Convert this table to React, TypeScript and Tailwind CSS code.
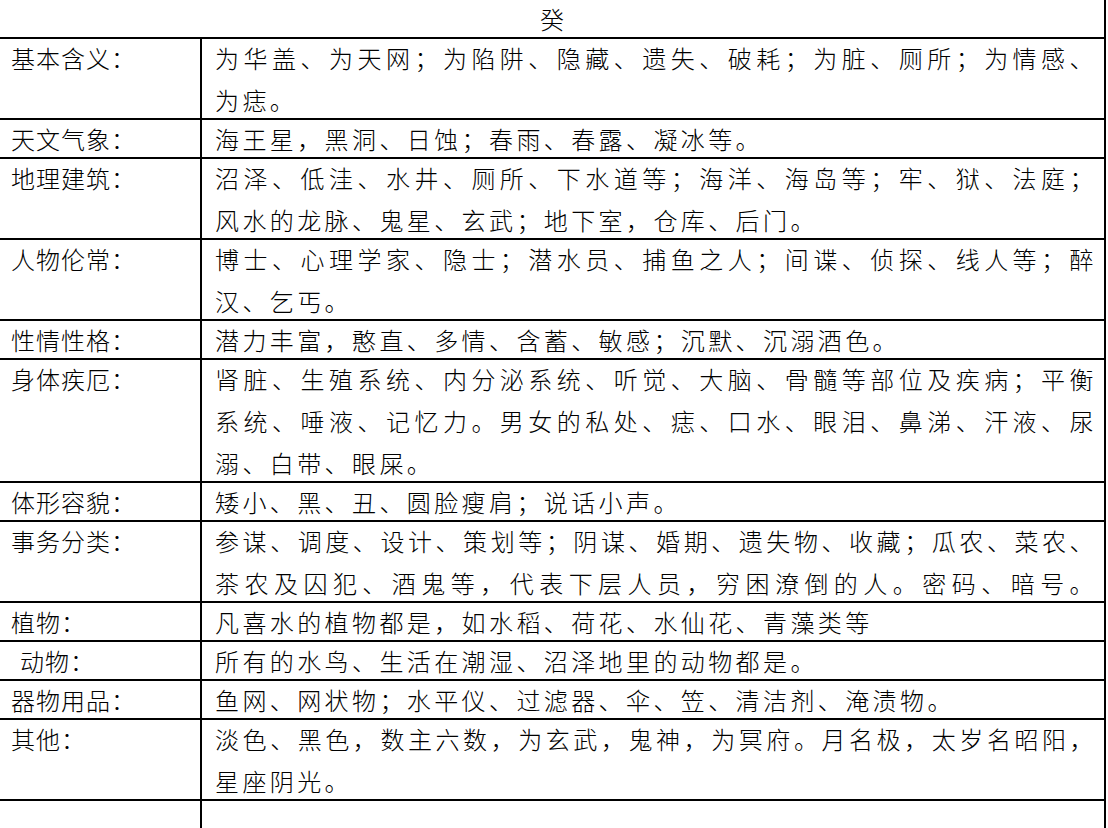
import React from "react";

type Row = { label: string; lines: string[]; indent?: boolean };

const rows: Row[] = [
  { label: "基本含义：", lines: ["为华盖、为天网；为陷阱、隐藏、遗失、破耗；为脏、厕所；为情感、", "为痣。"] },
  { label: "天文气象：", lines: ["海王星，黑洞、日蚀；春雨、春露、凝冰等。"] },
  { label: "地理建筑：", lines: ["沼泽、低洼、水井、厕所、下水道等；海洋、海岛等；牢、狱、法庭；", "风水的龙脉、鬼星、玄武；地下室，仓库、后门。"] },
  { label: "人物伦常：", lines: ["博士、心理学家、隐士；潜水员、捕鱼之人；间谍、侦探、线人等；醉", "汉、乞丐。"] },
  { label: "性情性格：", lines: ["潜力丰富，憨直、多情、含蓄、敏感；沉默、沉溺酒色。"] },
  { label: "身体疾厄：", lines: ["肾脏、生殖系统、内分泌系统、听觉、大脑、骨髓等部位及疾病；平衡", "系统、唾液、记忆力。男女的私处、痣、口水、眼泪、鼻涕、汗液、尿", "溺、白带、眼屎。"] },
  { label: "体形容貌：", lines: ["矮小、黑、丑、圆脸瘦肩；说话小声。"] },
  { label: "事务分类：", lines: ["参谋、调度、设计、策划等；阴谋、婚期、遗失物、收藏；瓜农、菜农、", "茶农及囚犯、酒鬼等，代表下层人员，穷困潦倒的人。密码、暗号。"] },
  { label: "植物：", lines: ["凡喜水的植物都是，如水稻、荷花、水仙花、青藻类等"] },
  { label: "动物：", lines: ["所有的水鸟、生活在潮湿、沼泽地里的动物都是。"], indent: true },
  { label: "器物用品：", lines: ["鱼网、网状物；水平仪、过滤器、伞、笠、清洁剂、淹渍物。"] },
  { label: "其他：", lines: ["淡色、黑色，数主六数，为玄武，鬼神，为冥府。月名极，太岁名昭阳，", "星座阴光。"] },
];

const justifyAll = new Set<string>(["茶农及囚犯、酒鬼等，代表下层人员，穷困潦倒的人。密码、暗号。"]);

export default function App() {
  return (
    <div className="w-[1108px] h-[828px] overflow-hidden bg-white text-black font-['Noto_Sans_CJK_SC',sans-serif] font-light text-[24px]">
      <div className="w-[1106px] border-r-2 border-black">
        <div className="h-[37px] flex items-center justify-center leading-[37px]">癸</div>
        {rows.map((r, i) => (
          <div key={i} className="grid grid-cols-[202px_1fr] border-t-2 border-black">
            <div className={`border-r-2 border-black -my-[2.5px] leading-[42px] tracking-[1px] whitespace-nowrap ${r.indent ? "pl-[20px]" : "pl-[11px]"}`}>
              {r.label}
            </div>
            <div className="-my-[2.5px] pl-[13px] pr-[7px] leading-[42px] tracking-[3.4px]">
              {r.lines.map((l, j) => {
                const justify = j < r.lines.length - 1 || justifyAll.has(l);
                return (
                  <div
                    key={j}
                    className={justify ? "whitespace-nowrap text-justify [text-align-last:justify]" : "whitespace-nowrap"}
                  >
                    {l}
                  </div>
                );
              })}
            </div>
          </div>
        ))}
        <div className="grid grid-cols-[202px_1fr] border-t-2 border-black h-[40px]">
          <div className="border-r-2 border-black" />
          <div />
        </div>
      </div>
    </div>
  );
}
